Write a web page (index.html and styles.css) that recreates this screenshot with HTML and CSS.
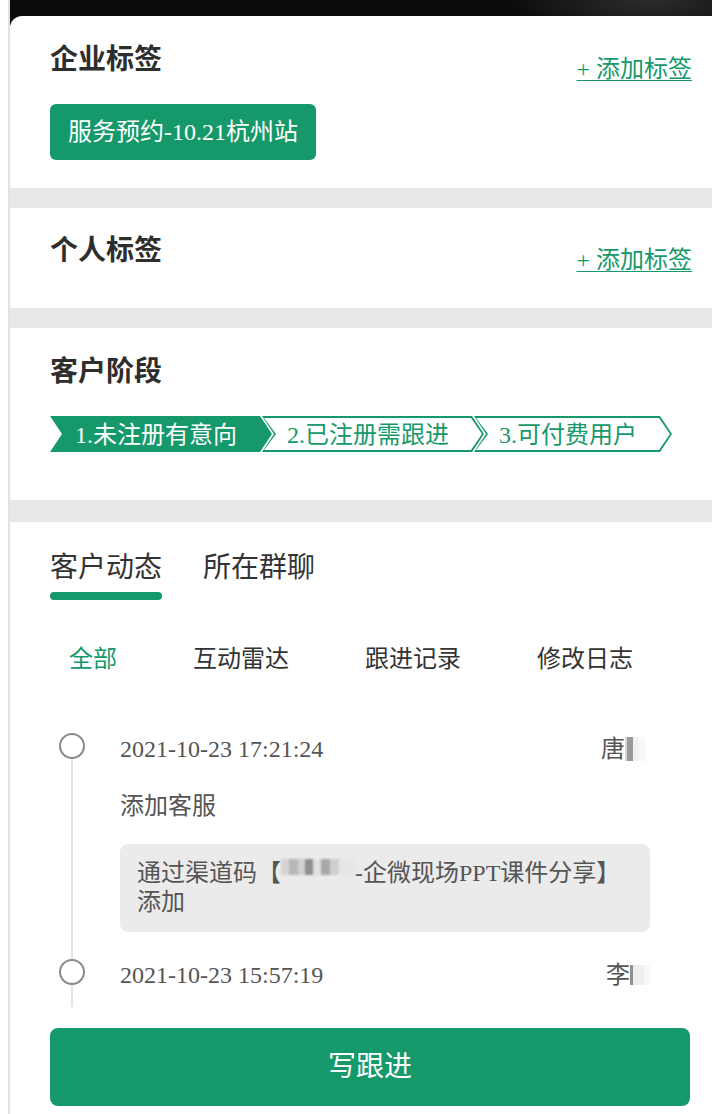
FILE: index.html
```html
<!DOCTYPE html>
<html lang="zh-CN">
<head>
<meta charset="utf-8">
<title>客户详情</title>
<link rel="stylesheet" href="styles.css">
</head>
<body>
<div class="page">
  <aside class="side"></aside>
  <main class="main">
    <div class="panel">
      <section class="sec sec-corp">
        <div class="sec-head">
          <h2 class="sec-title">企业标签</h2>
          <a class="add-link">+ 添加标签</a>
        </div>
        <div class="tag-list"><span class="tag">服务预约-10.21杭州站</span></div>
      </section>
      <div class="divider"></div>
      <section class="sec sec-personal">
        <div class="sec-head">
          <h2 class="sec-title">个人标签</h2>
          <a class="add-link">+ 添加标签</a>
        </div>
      </section>
      <div class="divider"></div>
      <section class="sec sec-stage">
        <h2 class="sec-title">客户阶段</h2>
        <div class="stages">
          <span class="stage done">1.未注册有意向</span>
          <span class="stage">2.已注册需跟进</span>
          <span class="stage">3.可付费用户</span>
        </div>
      </section>
      <div class="divider divider-lg"></div>
      <section class="sec sec-feed">
        <nav class="tabs">
          <div class="tab active">客户动态</div>
          <div class="tab">所在群聊</div>
        </nav>
        <nav class="subtabs">
          <span class="subtab active">全部</span>
          <span class="subtab">互动雷达</span>
          <span class="subtab">跟进记录</span>
          <span class="subtab">修改日志</span>
        </nav>
        <div class="timeline">
          <div class="tl-item first">
            <div class="tl-head"><span>2021-10-23 17:21:24</span><span class="tl-name">唐<span class="nblur"></span></span></div>
            <div class="tl-action">添加客服</div>
            <div class="tl-box">通过渠道码【<span class="blur"></span>-企微现场PPT课件分享】<br>添加</div>
          </div>
          <div class="tl-item last">
            <div class="tl-head"><span>2021-10-23 15:57:19</span><span class="tl-name">李<span class="nblur short"></span></span></div>
          </div>
        </div>
        <button class="write-btn" type="button">写跟进</button>
      </section>
    </div>
  </main>
</div>
</body>
</html>
```

FILE: styles.css
```css
html, body {
  margin: 0;
  padding: 0;
}

body {
  width: 712px;
  height: 1114px;
  overflow: hidden;
  background: #fff;
  font-family: "Liberation Serif", "Noto Sans CJK SC", serif;
  color: #333;
}

.page {
  display: flex;
  height: 1114px;
}

.side {
  flex: none;
  width: 8px;
  background: #fff;
  border-right: 2px solid #e3e3e3;
}

.main {
  flex: 1;
  display: flex;
  flex-direction: column;
  padding-top: 16px;
  background: radial-gradient(ellipse 140px 40px at 640px 0, #2c2c2c 0%, #1a1a1a 60%, #0b0b0b 100%), #0b0b0b;
  background-repeat: no-repeat;
}

.panel {
  flex: 1;
  background: #fff;
  border-top-left-radius: 12px;
}

.sec {
  padding: 0 20px 0 40px;
}

.sec-head {
  display: flex;
  justify-content: space-between;
  align-items: flex-end;
  height: 36px;
}

.sec-title {
  margin: 0;
  font-size: 28px;
  line-height: 36px;
  font-weight: 600;
  color: #2e2e2e;
}

.add-link {
  font-size: 24px;
  line-height: 28px;
  margin-bottom: -5px;
  color: #16996a;
  text-decoration: underline;
  text-decoration-thickness: 1px;
  text-underline-offset: 3px;
}

.sec-corp {
  padding-top: 26px;
  padding-bottom: 28px;
}

.tag-list {
  display: flex;
  margin-top: 26px;
}

.tag {
  display: inline-block;
  height: 56px;
  line-height: 56px;
  padding: 0 18px;
  border-radius: 6px;
  background: #16996a;
  color: #fff;
  font-size: 24px;
}

.divider {
  height: 20px;
  background: #e8e8e8;
}

.divider-lg {
  height: 22px;
}

.sec-personal {
  padding-top: 25px;
  padding-bottom: 39px;
}

.sec-stage {
  padding-top: 26px;
  padding-bottom: 48px;
}

.stages {
  display: flex;
  margin-top: 26px;
}

.stage {
  position: relative;
  isolation: isolate;
  height: 36px;
  line-height: 38px;
  font-size: 24px;
  padding: 0 35px 0 25px;
  white-space: nowrap;
  color: #16996a;
  background: #16996a;
  clip-path: polygon(0 0, calc(100% - 12px) 0, 100% 50%, calc(100% - 12px) 100%, 0 100%, 12px 50%);
}

.stage + .stage {
  margin-left: -10px;
}

.stage.done {
  color: #fff;
}

.stage:not(.done)::before {
  content: "";
  position: absolute;
  inset: 2px;
  z-index: -1;
  background: #fff;
  clip-path: polygon(0 0, calc(100% - 11px) 0, 100% 50%, calc(100% - 11px) 100%, 0 100%, 12px 50%);
}

.sec-feed {
  padding-top: 28px;
}

.tabs {
  display: flex;
  gap: 41px;
}

.tab {
  font-size: 28px;
  line-height: 36px;
  color: #333;
  padding-bottom: 14px;
}

.tab.active::after {
  content: "";
  display: block;
  margin-top: 6px;
  height: 8px;
  border-radius: 4px;
  background: #16996a;
}

.tab.active {
  padding-bottom: 0;
}

.subtabs {
  display: flex;
  gap: 76px;
  margin-top: 44px;
  padding-left: 19px;
}

.subtab {
  font-size: 24px;
  line-height: 30px;
  color: #333;
}

.subtab.active {
  color: #16996a;
}

.timeline {
  margin-top: 59px;
  padding: 0 42px 0 70px;
}

.tl-item {
  position: relative;
}

.tl-item::before {
  content: "";
  position: absolute;
  left: -61px;
  top: 0;
  width: 26px;
  height: 26px;
  box-sizing: border-box;
  border: 2px solid #8a8a8a;
  border-radius: 50%;
  background: #fff;
  z-index: 1;
}

.tl-item::after {
  content: "";
  position: absolute;
  left: -49px;
  top: 26px;
  bottom: 0;
  width: 2px;
  background: #e4e4e4;
}

.tl-item.first {
  padding-bottom: 27px;
}

.tl-item.last {
  padding-bottom: 16px;
}

.tl-head {
  display: flex;
  justify-content: space-between;
  font-size: 24px;
  line-height: 32px;
  color: #555;
}

.tl-name {
  display: inline-flex;
  align-items: center;
}

.nblur {
  display: inline-block;
  width: 25px;
  height: 24px;
  background: linear-gradient(90deg, #d8d8d8 0 2px, #9a9a9a 2px 8px, #f0f0f0 8px 13px, #f7f7f7 13px 20px, #fff 20px 25px);
  filter: blur(0.6px);
}

.nblur.short {
  width: 20px;
  height: 20px;
  background: linear-gradient(90deg, #8f8f8f 0 3px, #eeeeee 3px 14px, #f8f8f8 14px 20px);
}

.tl-action {
  margin-top: 25px;
  font-size: 24px;
  line-height: 32px;
  color: #555;
}

.tl-box {
  margin-top: 22px;
  padding: 15px 17px;
  border-radius: 8px;
  background: #ebebeb;
  font-size: 24px;
  line-height: 29px;
  color: #555;
}

.blur {
  display: inline-block;
  width: 74px;
  height: 16px;
  vertical-align: 6px;
  background:
    linear-gradient(90deg, #d4d4d4 0 8px, #b8b8b8 8px 17px, #d0d0d0 17px 24px, #8f8f8f 24px 32px, #e0e0e0 32px 40px, #a8a8a8 40px 49px, #cfcfcf 49px 58px, #e6e6e6 58px 74px);
  filter: blur(1px);
}

.write-btn {
  display: block;
  width: 640px;
  height: 78px;
  margin: 21px 0 0 0;
  border: 0;
  border-radius: 8px;
  background: #16996a;
  color: #fff;
  font-family: inherit;
  font-size: 28px;
  line-height: 78px;
  padding: 0;
}
```
